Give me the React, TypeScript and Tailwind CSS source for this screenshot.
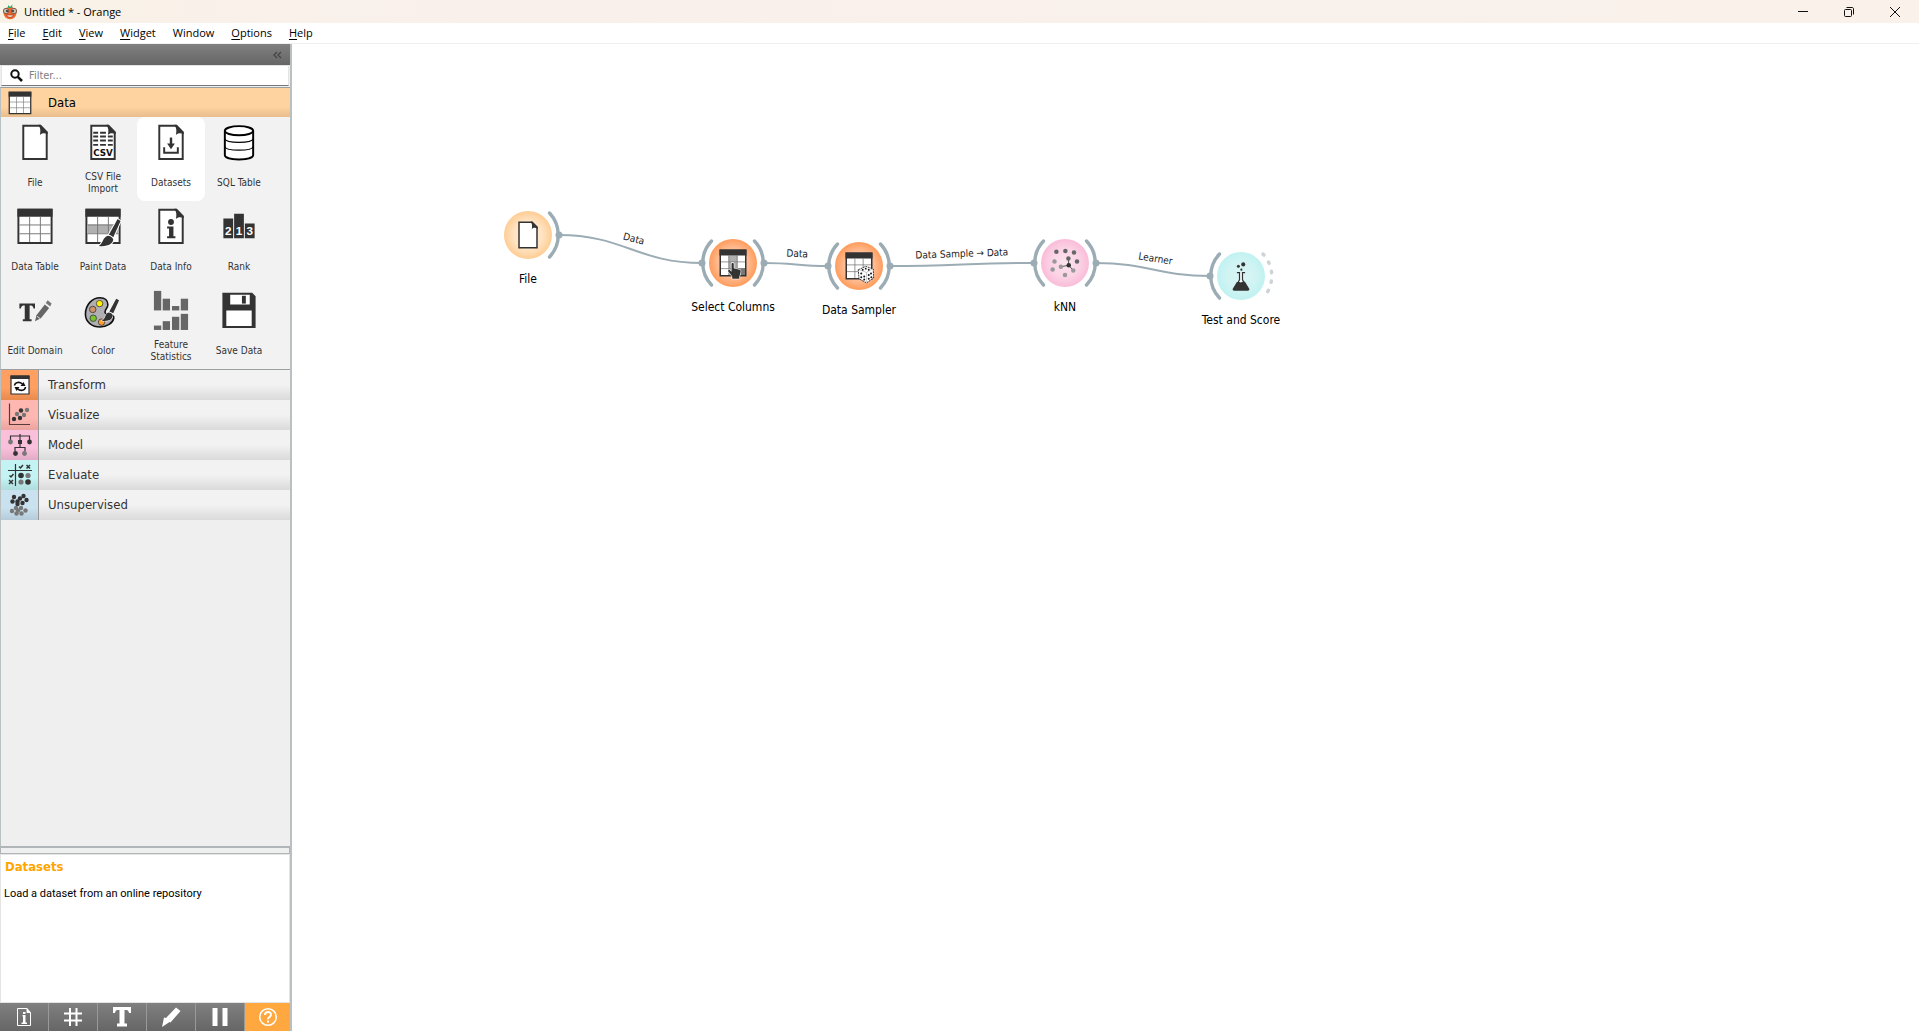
import type { ReactNode } from "react";

const INK = "#333333";

function DocShape() {
  return (
    <>
      <path d="M12 7H29L36 14V41H12Z" fill="#fff" stroke={INK} strokeWidth="2" />
      <path d="M27.500 6H30L37 13V15.500C34 14 31 14 29 16.500C30 12 29.500 9 27.500 6Z" fill={INK} />
    </>
  );
}

function TableShape({ tint }: { tint?: "row" | "column" }) {
  return (
    <>
      <path d="M7 7H41V41H7Z" fill="#fff" stroke={INK} strokeWidth="2" />
      {tint === "row" && <path d="M8 22H40V31H8Z" fill="#b0b0b0" />}
      {tint === "column" && <path d="M18 14H30V40H18Z" fill="#b0b0b0" />}
      {tint === "column" && <path d="M30 31H40V40H30Z" fill="#777" />}
      <path d="M6 6H42V14H6Z" fill={INK} />
      <path d="M18.500 14V40M29.500 14V40M8 22.500H40M8 31.500H40" stroke="#777" strokeWidth="1" />
    </>
  );
}

function Brush() {
  return (
    <g stroke="#fff" strokeWidth="2" paintOrder="stroke">
      <path d="M39 16.500L42 18.500L34.500 35L30 32.500Z" fill={INK} />
      <path d="M29 33.500C31 33.500 34 35 34.500 37.500C34 42 29 45 19.500 44C24 42 23.500 35 29 33.500Z" fill={INK} />
    </g>
  );
}

function Bars({ items, color }: { items: [number, number, number][]; color: string }) {
  return (
    <>
      {items.map(([x, top, bottom]) => (
        <rect key={`${x}-${top}`} x={x} y={top} width="7.500" height={bottom - top} fill={color} />
      ))}
    </>
  );
}

const shapes: Record<string, ReactNode> = {
  file: <DocShape />,
  csv: (
    <>
      <DocShape />
      <path
        d="M14 14H19M21 14H27M14 18H19M21 18H27M29 18H34M14 22H19M21 22H27M29 22H34M14 26.500H19M21 26.500H27M29 26.500H34"
        stroke={INK}
        strokeWidth="2"
      />
      <text x="24" y="37.500" textAnchor="middle" fontSize="9" fontWeight="700" fontFamily="DejaVu Sans, sans-serif" fill="#111">
        CSV
      </text>
    </>
  ),
  datasets: (
    <>
      <DocShape />
      <path d="M24 19V27" stroke={INK} strokeWidth="2.500" />
      <path d="M20 25H28L24 31Z" fill={INK} />
      <path d="M17 29V34.500H31V29" fill="none" stroke={INK} strokeWidth="2" />
    </>
  ),
  sql: (
    <g stroke="#000" fill="#fff">
      <path d="M9.500 12V37C9.500 43 38.500 43 38.500 37V12" strokeWidth="2" />
      <ellipse cx="24" cy="12" rx="14.500" ry="4.700" strokeWidth="2" />
      <path d="M9.500 20.500C11 25 37 25 38.500 20.500M9.500 28.500C11 33 37 33 38.500 28.500" fill="none" strokeWidth="1.200" />
    </g>
  ),
  table: <TableShape />,
  paint: (
    <>
      <TableShape tint="row" />
      <Brush />
    </>
  ),
  info: (
    <>
      <DocShape />
      <circle cx="24" cy="19.500" r="3" fill={INK} />
      <path d="M20 24H26.500V34H28.500V36H20V34H22V26H20Z" fill={INK} />
    </>
  ),
  rank: (
    <>
      <path d="M8 16H18V36H8ZM19 11H29V36H19ZM30 21H40V36H30Z" fill={INK} />
      <g fontSize="12" fontWeight="700" fontFamily="Liberation Sans, sans-serif" fill="#fff" textAnchor="middle">
        <text x="13" y="33">2</text>
        <text x="24" y="33">1</text>
        <text x="35" y="33">3</text>
      </g>
    </>
  ),
  edit: (
    <>
      <path d="M8 17H24V22H22.500C22 19.500 21 19 18.500 19V33H20.500V35H11.500V33H13.500V19C11 19 10 19.500 9.500 22H8Z" fill={INK} />
      <path d="M24 35L25.500 29L34 18L38.500 21.500L30 32Z" fill="#666" />
      <path d="M35 16.500L37 13.500L41 17L39.500 20Z" fill="#777" />
      <path d="M26 30L29.500 32.500" stroke="#ddd" />
    </>
  ),
  color: (
    <>
      <path
        d="M21 11C13 11 6 18 6 28C6 36 13 41 21 41C28 41 34 37 35 32C36 27 27 30 26 26C26 22 29 22 29 18C29 14 26 11 21 11Z"
        fill="#b0b0b4"
        stroke="#111"
        strokeWidth="1.600"
      />
      <g stroke="#333" strokeWidth="0.800">
        <circle cx="20.500" cy="17" r="3.300" fill="#ffee00" />
        <circle cx="13.500" cy="23" r="3.300" fill="#cc9468" />
        <circle cx="14" cy="32" r="3.300" fill="#7ac52c" />
        <circle cx="22.500" cy="36" r="3.300" fill="#ff9d2e" />
      </g>
      <g stroke="#fff" strokeWidth="1" paintOrder="stroke">
        <path d="M37.500 12L40.500 13.500L34.500 27L30.500 25Z" fill={INK} />
        <path d="M29.500 26C32 26 34 27.500 34 29.500C33 34 29 35.500 22.500 34.500C27 33 25.500 27.500 29.500 26Z" fill={INK} />
      </g>
    </>
  ),
  stats: (
    <Bars
      color="#666"
      items={[
        [6.5, 4, 24],
        [15.5, 12, 24],
        [25, 19.5, 24],
        [34, 12, 24],
        [6.5, 39.5, 44],
        [15.5, 35, 44],
        [25, 30.5, 44],
        [34, 27.5, 44],
      ]}
    />
  ),
  save: (
    <>
      <path d="M7 6H37.500L41 9.500V42H7Z" fill={INK} />
      <path d="M15 8H35V18H15ZM11 24H37V40H11Z" fill="#fff" />
      <path d="M27 9H31V17H27Z" fill={INK} />
    </>
  ),
  select: (
    <>
      <TableShape tint="column" />
      <path
        d="M22 25C22 23.500 25 23.500 25 25V31L33 33C34.500 33.500 34.500 35 34 37L32.500 42V45H23V42L17.500 35C17 33.500 19 32.500 20 33.500L22 35.500Z"
        fill={INK}
        stroke="#fff"
        strokeWidth="1.500"
        paintOrder="stroke"
      />
    </>
  ),
  sampler: (
    <>
      <TableShape />
      <path d="M23 29L33 24.500L43 28L43.500 40L34 46.500L24 41Z" fill="#fff" stroke="#222" strokeWidth="1.200" strokeDasharray="2.500 1" strokeLinejoin="round" />
      <path d="M24 29L34 32.500L42 28M34 32.500V45" fill="none" stroke="#999" strokeWidth="0.700" />
      <g fill="#111">
        <circle cx="29" cy="29" r="1.200" />
        <circle cx="33" cy="27.500" r="1.200" />
        <circle cx="37" cy="29" r="1.200" />
        <circle cx="27" cy="34" r="1.300" />
        <circle cx="31" cy="38" r="1.300" />
        <circle cx="27" cy="39" r="1.300" />
        <circle cx="31" cy="42" r="1.300" />
        <circle cx="37" cy="36" r="1.300" />
        <circle cx="40" cy="34" r="1.300" />
        <circle cx="37" cy="41" r="1.300" />
        <circle cx="40.500" cy="39" r="1.300" />
      </g>
    </>
  ),
  knn: (
    <>
      <path d="M29 27L28.500 18M29 27L18.500 29M29 27L35 34" stroke="#555" strokeWidth="1.300" />
      <g fill="#666">
        <circle cx="12.500" cy="9" r="3" />
        <circle cx="24.500" cy="8" r="3" />
        <circle cx="36" cy="10" r="3" />
        <circle cx="40" cy="22" r="3" />
        <circle cx="28.500" cy="18" r="3" />
      </g>
      <g fill="#999">
        <circle cx="10" cy="22" r="3" />
        <circle cx="18.500" cy="29" r="3" />
        <circle cx="7.500" cy="32.500" r="3" />
        <circle cx="35" cy="34" r="3" />
        <circle cx="24" cy="40" r="3" />
      </g>
      <circle cx="29" cy="27" r="3" fill={INK} />
    </>
  ),
  test: (
    <g fill={INK}>
      <circle cx="27" cy="8.500" r="2.700" />
      <circle cx="20.500" cy="11" r="2" />
      <circle cx="24.500" cy="15.500" r="1.400" />
      <path d="M18.500 19.500H22V29L17 38H31L26 29V19.500H29.500" fill="#f2fbfb" stroke={INK} strokeWidth="1.600" />
      <path d="M18.500 32H22C25 34 26 30 29.500 32L35 41C35.500 43 34.500 43.500 33 43.500H15C13.500 43.500 12.500 43 13 41Z" />
    </g>
  ),
};

function Icon({ name, className }: { name: string; className: string }) {
  return (
    <svg viewBox="0 0 48 48" className={className} aria-hidden="true">
      {shapes[name]}
    </svg>
  );
}

const widgets = [
  ["file", "File"],
  ["csv", "CSV File Import"],
  ["datasets", "Datasets"],
  ["sql", "SQL Table"],
  ["table", "Data Table"],
  ["paint", "Paint Data"],
  ["info", "Data Info"],
  ["rank", "Rank"],
  ["edit", "Edit Domain"],
  ["color", "Color"],
  ["stats", "Feature Statistics"],
  ["save", "Save Data"],
];

const dots = (items: [number, number][], fill: string, r = 2.2) =>
  items.map(([x, y]) => <circle key={`${x},${y}`} cx={x} cy={y} r={r} fill={fill} />);

const categories = [
  {
    label: "Transform",
    tint: "bg-linear-to-b from-[#ff9f61] from-60% to-[#e8894e]",
    art: (
      <>
        <path d="M3 3H21V21H3Z" fill="#fff" stroke={INK} strokeWidth="1.200" />
        <path d="M2.500 2.500H21.500V6H2.500Z" fill={INK} />
        <path d="M6.500 12.500C7 9 11.500 8.500 14.500 11M17.500 14C17 18 12.500 18 9.500 16" fill="none" stroke="#111" strokeWidth="1.600" />
        <path d="M12.500 13L17.500 13L15.500 9ZM11.500 14L6.500 14L8.500 18Z" fill="#111" />
      </>
    ),
  },
  {
    label: "Visualize",
    tint: "bg-linear-to-b from-[#ffb7b1] from-60% to-[#eaa39e]",
    art: (
      <>
        <path d="M1.500 0.500V21.500H22" fill="none" stroke="#5a3a3a" strokeWidth="1.200" />
        {dots([[13, 7.500], [6, 16], [12, 15]], INK)}
        {dots([[19, 7], [9, 11], [16, 12]], "#777")}
      </>
    ),
  },
  {
    label: "Model",
    tint: "bg-linear-to-b from-[#fac0db] from-60% to-[#e2abc5]",
    art: (
      <>
        <path d="M2.500 7V3H21.500V7M12 1V14.500M7 18V14.500H17V18" fill="none" stroke={INK} strokeWidth="1.200" />
        <path d="M10 7H14V11H10Z" fill={INK} />
        {dots([[21.500, 9], [7.500, 20.500]], INK, 2.4)}
        {dots([[2.500, 9], [16.500, 20.500]], "#777", 2.4)}
      </>
    ),
  },
  {
    label: "Evaluate",
    tint: "bg-linear-to-b from-[#c3f3f3] from-60% to-[#afdcdc]",
    art: (
      <>
        <path d="M0 7.500H24M7.500 1V23" stroke={INK} strokeWidth="1.200" />
        <path d="M11 3.500L12.500 5L15 2M1.500 12.500L3 14L5.500 11M18.500 2L22 5.500M22 2L18.500 5.500M1 17L5 21M5 17L1 21" fill="none" stroke={INK} strokeWidth="1.500" />
        {dots([[13, 12.500], [20, 19]], INK, 2.8)}
        {dots([[20, 12.500], [13, 19]], "#777", 2.6)}
      </>
    ),
  },
  {
    label: "Unsupervised",
    tint: "bg-linear-to-b from-[#cae1ef] from-60% to-[#b5cbd9]",
    art: (
      <>
        {dots([[6, 4], [12, 5.500], [15.500, 3], [4.500, 8.500], [9.500, 8.500], [14.500, 10], [18.500, 7], [9.500, 11]], INK)}
        {dots([[8, 15], [13, 15], [4, 18], [10, 17.500], [17.500, 17.500], [8.500, 20.500], [13.500, 20.500]], "#777")}
      </>
    ),
  },
];

const menus = ["File", "Edit", "View", "Widget", "Window", "Options", "Help"];

const nodes = [
  { icon: "file", label: "File", x: 236, y: 191, disc: "bg-[radial-gradient(closest-side,#ffefdd_0%,#ffe3c2_60%,#fecd94_100%)]", left: "none", right: "solid" },
  { icon: "select", label: "Select Columns", x: 441, y: 219, disc: "bg-[radial-gradient(closest-side,#ffd9c4_0%,#ffbd95_60%,#ff9c5c_100%)]", left: "solid", right: "solid" },
  { icon: "sampler", label: "Data Sampler", x: 567, y: 222, disc: "bg-[radial-gradient(closest-side,#ffd9c4_0%,#ffbd95_60%,#ff9c5c_100%)]", left: "solid", right: "solid" },
  { icon: "knn", label: "kNN", x: 773, y: 219, disc: "bg-[radial-gradient(closest-side,#fbe3ee_0%,#fbd3e5_60%,#fabcd9_100%)]", left: "solid", right: "solid" },
  { icon: "test", label: "Test and Score", x: 949, y: 232, disc: "bg-[radial-gradient(closest-side,#daf5f4_0%,#d0f4f3_60%,#bff2f1_100%)]", left: "solid", right: "dashed" },
];

const links = [
  { from: [267, 191], to: [410, 219], label: "Data", at: [341, 198], turn: 15 },
  { from: [472, 219], to: [536, 222], label: "Data", at: [505, 213], turn: 3 },
  { from: [598, 222], to: [742, 219], label: "Data Sample → Data", at: [670, 213], turn: -2 },
  { from: [804, 219], to: [918, 232], label: "Learner", at: [863, 218], turn: 9 },
];

function Node({ icon, label, x, y, disc, left, right }: (typeof nodes)[number]) {
  return (
    <div className="absolute flex w-32 flex-col items-center gap-3" style={{ left: x - 64, top: y - 24 }}>
      <div className={`relative flex size-12 items-center justify-center rounded-full ${disc}`}>
        <Icon name={icon} className="size-9" />
        <svg viewBox="-40 -24 80 48" className="absolute -left-4 h-12 w-20" fill="none" aria-hidden="true">
          {left === "solid" && (
            <>
              <path d="M-21.500 -22A32 32 0 0 0 -21.500 22" stroke="#9cacb4" strokeWidth="3.400" strokeLinecap="round" />
              <circle cx="-31" cy="0" r="3.500" fill="#9cacb4" />
            </>
          )}
          {right === "solid" && (
            <>
              <path d="M21.500 -22A32 32 0 0 1 21.500 22" stroke="#9cacb4" strokeWidth="3.400" strokeLinecap="round" />
              <circle cx="31" cy="0" r="3.500" fill="#9cacb4" />
            </>
          )}
          {right === "dashed" && (
            <path d="M22 -22A32 32 0 0 1 22 22" stroke="#cdd3d7" strokeWidth="3.400" strokeLinecap="round" strokeDasharray="1.500 8.200" />
          )}
        </svg>
      </div>
      <span className="text-xs leading-4 whitespace-nowrap text-black">{label}</span>
    </div>
  );
}

const toolIcons: [string, ReactNode][] = [
  [
    "Workflow info",
    <>
      <path d="M4.500 2.500H14L17.500 6.500V19.500H4.500Z" fill="none" stroke="#fff" strokeWidth="1" />
      <path d="M14 2.500V6.500H17.500" fill="#fff" stroke="#fff" />
      <path d="M9.500 9H12.500V16.500H14V18H8.500V16.500H10V10.500H9.500ZM10 6H12.500V8H10Z" fill="#fff" />
    </>,
  ],
  ["Align to grid", <path d="M8 2V20M14.500 2V20M2 7.500H20M2 14.500H20" stroke="#fff" strokeWidth="2" />],
  ["Text annotation", <path d="M2 1H20V7H18C17.500 4.500 17 4 13.500 4V17.500H16V20.500H6V17.500H8.500V4C5 4 4.500 4.500 4 7H2Z" fill="#fff" />],
  ["Arrow annotation", <path d="M16 1.500L20.500 5L10.500 16.500L9.500 16L2 21L4 11.500L6 12Z" fill="#fff" />],
  ["Pause signal propagation", <path d="M3.500 2H8.500V20H3.500ZM13.500 2H18.500V20H13.500Z" fill="#fff" />],
  [
    "Help",
    <>
      <circle cx="11" cy="11" r="8.300" fill="none" stroke="#fff" strokeWidth="1.500" />
      <path d="M8 9C8 5 14 5 14 8.700C14 11 11 11 11 13.200M11 14.500V16.500" fill="none" stroke="#fff" strokeWidth="2" />
    </>,
  ],
];

export default function App() {
  return (
    <div className="flex h-screen flex-col overflow-hidden bg-white font-['DejaVu_Sans_Condensed','DejaVu_Sans',sans-serif] text-black">
      <header className="flex h-[23px] shrink-0 items-center justify-between bg-linear-to-r from-[#f9f2e7] via-[#f9f0ec] via-25% to-[#f9f1ea]">
        <div className="flex items-center gap-[6px] pl-[2px]">
          <svg viewBox="0 0 16 16" className="size-4" aria-hidden="true">
            <ellipse cx="8" cy="9" rx="6.500" ry="6.200" fill="#f2652b" />
            <path d="M6 1L8 3L10.500 0.500L10 4H6Z" fill="#2fa868" />
            <circle cx="4" cy="7" r="2.700" fill="#c9bdb0" stroke="#6b4a3c" strokeWidth="0.800" />
            <circle cx="12" cy="7" r="2.700" fill="#c9bdb0" stroke="#6b4a3c" strokeWidth="0.800" />
            <circle cx="5" cy="7" r="1.100" fill="#333" />
            <circle cx="11" cy="7" r="1.100" fill="#333" />
            <path d="M4.500 11H11.500C10.500 14 5.500 14 4.500 11Z" fill="#fff" stroke="#a33a1a" strokeWidth="0.800" />
          </svg>
          <h1 className="font-['Open_Sans',sans-serif] text-[11px] leading-4">Untitled * - Orange</h1>
        </div>
        <div className="flex h-full pr-px">
          <button aria-label="Minimize" className="flex w-[46px] items-center justify-center">
            <svg viewBox="0 0 10 10" className="size-[10px]" stroke="#111" fill="none"><path d="M0 4.500H10" /></svg>
          </button>
          <button aria-label="Restore" className="flex w-[46px] items-center justify-center">
            <svg viewBox="0 0 10 10" className="size-[10px]" stroke="#111" fill="none"><rect x="0.500" y="2.500" width="7" height="7" rx="1" /><path d="M2.500 0.500H8C9 0.500 9.500 1 9.500 2V7.500" /></svg>
          </button>
          <button aria-label="Close" className="flex w-[46px] items-center justify-center">
            <svg viewBox="0 0 10 10" className="size-[10px]" stroke="#111" fill="none"><path d="M0 0L10 10M10 0L0 10" /></svg>
          </button>
        </div>
      </header>

      <nav className="flex h-[21px] shrink-0 items-center gap-[17px] border-b border-[#f0f0f0] px-2 font-['Open_Sans',sans-serif] text-[11px] leading-4">
        {menus.map((m) => (
          <button key={m}>
            {m === "Window" ? m : <><u className="underline-offset-2">{m[0]}</u>{m.slice(1)}</>}
          </button>
        ))}
      </nav>

      <div className="flex min-h-0 flex-1">
        <aside className="flex w-[292px] shrink-0 flex-col border-r-2 border-[#b9c0c2] bg-[#efefef]">
          <div className="flex h-[21px] shrink-0 items-center justify-end bg-linear-to-b from-[#808080] to-[#666] pr-2">
            <button aria-label="Collapse">
              <svg viewBox="0 0 9 8" className="h-2 w-[9px]" fill="none" stroke="#444" strokeWidth="1.300"><path d="M4 1L1 4L4 7M8 1L5 4L8 7" /></svg>
            </button>
          </div>
          <label className="mx-px mb-px flex h-[21px] shrink-0 items-center gap-[6px] border border-[#e4e4e4] border-b-[#777] bg-white pl-2">
            <svg viewBox="0 0 13 13" className="size-[13px] shrink-0" fill="none" stroke="#111" aria-hidden="true"><circle cx="5" cy="5" r="3.700" strokeWidth="2" /><path d="M7.800 7.800L12 12" strokeWidth="2.600" /></svg>
            <input aria-label="Filter" placeholder="Filter..." className="min-w-0 flex-1 bg-transparent pt-px text-[11px] leading-4 outline-none placeholder:text-[#808080]" />
          </label>

          <section className="shrink-0 border-y border-l border-[#9a9fa2] border-l-[#b9c0c2] bg-[#f2f2f2]">
            <button className="flex h-[29px] w-full items-center bg-linear-to-b from-[#ffd39f] from-65% to-[#e9bd8c] text-[13px]">
              <span className="flex w-[38px] justify-center">
                <svg viewBox="5 5 38 38" className="size-6" aria-hidden="true"><TableShape /></svg>
              </span>
              <span className="pl-[9px]">Data</span>
            </button>
            <div className="grid grid-cols-[repeat(4,68px)]">
              {widgets.map(([icon, label]) => (
                <button
                  key={label}
                  className={
                    icon === "datasets"
                      ? "flex h-[84px] flex-col items-center rounded-lg bg-white"
                      : "flex h-[84px] flex-col items-center rounded-lg"
                  }
                >
                  <Icon name={icon} className="mt-[2px] size-12" />
                  <span className="flex h-9 w-[60px] items-center justify-center text-center text-[10px] leading-3 text-[#333]">{label}</span>
                </button>
              ))}
            </div>
          </section>

          <div className="flex shrink-0 flex-col border-l border-[#b9c0c2]">
            {categories.map(({ label, tint, art }) => (
              <button key={label} className="flex h-[30px] items-center bg-linear-to-b from-[#f2f2f2] from-50% to-[#dadada] text-[13px] text-[#333]">
                <span className={`flex h-full w-[38px] items-center justify-center border-r border-[#999] ${tint}`}>
                  <svg viewBox="0 0 24 24" className="size-6" aria-hidden="true">{art}</svg>
                </span>
                <span className="pl-[9px]">{label}</span>
              </button>
            ))}
          </div>

          <div className="flex-1 border-l border-[#b9c0c2]" />
          <div className="h-2 shrink-0 border-x border-t-2 border-b border-[#b0b5b7]" />

          <section className="h-[149px] shrink-0 border border-[#e4e4e4] bg-white">
            <h2 className="px-1 pt-1 text-[13px] leading-4 font-bold text-[#ffa500]">Datasets</h2>
            <p className="px-[3px] pt-[11px] font-[Roboto,sans-serif] text-[11px] leading-4">Load a dataset from an online repository</p>
          </section>

          <div className="grid h-7 shrink-0 grid-cols-[repeat(5,49px)_1fr] bg-linear-to-b from-[#808080] to-[#666]">
            {toolIcons.map(([label, art]) => (
              <button
                key={label}
                aria-label={label}
                className={
                  label === "Help"
                    ? "flex items-center justify-center bg-[#ffa840]"
                    : "flex items-center justify-center border-r border-[#999]"
                }
              >
                <svg viewBox="0 0 22 22" className="size-[22px]" aria-hidden="true">{art}</svg>
              </button>
            ))}
          </div>
        </aside>

        <main className="relative min-w-0 flex-1 overflow-hidden bg-white">
          <svg className="absolute inset-0 size-full" fill="none">
            {links.map(({ from: [x1, y1], to: [x2, y2], label, at: [lx, ly], turn }) => {
              const mid = (x2 - x1) * 0.45;
              return (
                <g key={`${label}-${x1}`}>
                  <path d={`M${x1} ${y1}C${x1 + mid} ${y1} ${x2 - mid} ${y2} ${x2} ${y2}`} stroke="#9cacb4" strokeWidth="2" />
                  <text x={lx} y={ly} transform={`rotate(${turn} ${lx} ${ly})`} textAnchor="middle" fontSize="10" fill="#222">
                    {label}
                  </text>
                </g>
              );
            })}
          </svg>
          {nodes.map((n) => (
            <Node key={n.label} {...n} />
          ))}
        </main>
      </div>
    </div>
  );
}
